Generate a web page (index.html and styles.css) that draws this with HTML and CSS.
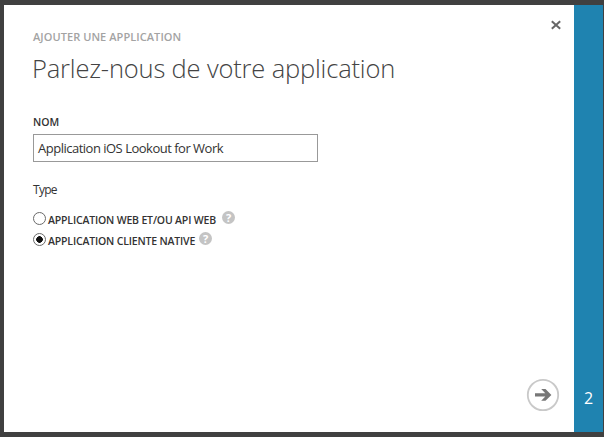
FILE: index.html
```html
<!DOCTYPE html>
<html lang="fr">
<head>
<meta charset="utf-8">
<title>Ajouter une application</title>
<link rel="stylesheet" href="styles.css">
</head>
<body>
<div class="dialog">
  <main class="content">
    <p class="eyebrow">AJOUTER UNE APPLICATION</p>
    <h1 class="title">Parlez-nous de votre application</h1>
    <div class="label">NOM</div>
    <div class="field">Application iOS Lookout for Work</div>
    <p class="type">Type</p>
    <div class="option option-web">
      <span class="radio"></span>
      <span class="option-text">APPLICATION WEB ET/OU API WEB</span>
      <span class="help">?</span>
    </div>
    <div class="option option-native">
      <span class="radio checked"></span>
      <span class="option-text">APPLICATION CLIENTE NATIVE</span>
      <span class="help">?</span>
    </div>
  </main>
  <div class="actions">
    <svg class="close" width="10" height="10" viewBox="0 0 10 10"><path d="M.8 1.2 9.2 8.8M9.2 1.2.8 8.8" fill="none" stroke="#666" stroke-width="2"/></svg>
    <svg class="next" width="34" height="34" viewBox="0 0 34 34"><circle cx="17" cy="17" r="15.2" fill="#fff" stroke="#c9c9c9" stroke-width="1.8"/><path d="M9 15.2h10.3L15.2 11h4.3l5.9 5.9-5.9 5.9h-4.3l4.1-4.2H9z" fill="#777"/></svg>
  </div>
  <aside class="step">2</aside>
</div>
</body>
</html>
```
FILE: styles.css
```css
* { box-sizing: border-box; }
body {
  margin: 0;
  height: 437px;
  padding: 5px 1px 5px 4px;
  background: #404040;
  font-family: "Open Sans", "Noto Sans", sans-serif;
  color: #333;
  overflow: hidden;
}
p, h1 { margin: 0; }
.dialog { display: flex; height: 427px; background: #fff; }
.content { width: 500px; padding: 23px 0 0 29px; white-space: nowrap; }
.eyebrow { height: 18px; font-size: 11px; line-height: 18px; font-weight: 600; letter-spacing: 0.07px; color: #a3a3a3; }
.title { height: 40px; margin-top: 2px; margin-left: -1px; font-size: 25.5px; line-height: 40px; font-weight: 300; letter-spacing: -0.17px; color: #444; }
.label { height: 16px; margin-top: 26px; font-size: 10.5px; line-height: 17px; font-weight: 600; }
.field { width: 285px; height: 28px; margin-top: 4px; padding-left: 4px; border: 1px solid #999; font-size: 13px; line-height: 27px; letter-spacing: -0.5px; }
.type { height: 20px; margin-top: 18px; font-size: 12px; line-height: 20px; letter-spacing: -0.7px; }
.option { display: flex; height: 21px; font-size: 10.5px; font-weight: 600; }
.option-web { margin-top: 7px; }
.radio { width: 13px; height: 13px; margin: 5px 2px 0 0; border: 1px solid #6a6a6a; border-radius: 50%; }
.checked { background: radial-gradient(circle, #111 3px, transparent 3.6px); }
.option-text { width: 169px; padding-top: 4px; line-height: 18px; letter-spacing: -0.17px; }
.option-native .option-text { width: 146px; }
.help { width: 13px; height: 13px; margin: 4px 0 0 5px; border-radius: 50%; background: #c4c4c4; color: #fff; font-size: 11px; font-weight: 700; line-height: 13px; text-align: center; }
.actions { display: flex; flex: 1; flex-direction: column; justify-content: space-between; align-items: flex-end; padding: 15px 14px 20px 0; }
.close { margin-right: -1px; }
.step { width: 29px; padding-top: 382px; background: #1f83b0; color: #fff; font-size: 16px; line-height: 22px; text-align: center; }
```
